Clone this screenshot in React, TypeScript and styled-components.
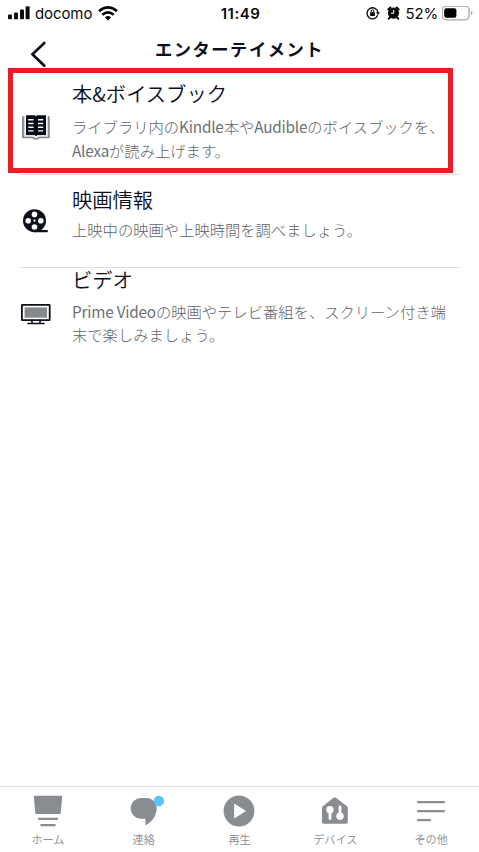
import React from "react";
import styled, { createGlobalStyle } from "styled-components";

const GlobalStyle = createGlobalStyle`
  * { box-sizing: border-box; }
  body { margin: 0; background: #fff; }
`;

const Screen = styled.div`
  position: relative;
  width: 479px;
  height: 852px;
  display: flex;
  flex-direction: column;
  overflow: hidden;
  background: #fff;
  color: #0d0f1c;
  font-family: "Noto Sans CJK JP", sans-serif;
`;

const StatusBar = styled.div`
  height: 26px;
  flex: none;
  display: grid;
  grid-template-columns: 1fr auto 1fr;
  padding: 0 6px 0 8px;
  font: 400 15.3px/26px Inter, sans-serif;
  color: #0b0b0b;
`;

const StatusGroup = styled.div<{ $end?: boolean }>`
  display: flex;
  align-items: center;
  justify-content: ${(p) => (p.$end ? "flex-end" : "flex-start")};
  svg { display: block; flex: none; }
`;

const Carrier = styled.span`
  margin: 1px 6px 0 5px;
  font-size: 15px;
  line-height: 25px;
  letter-spacing: -0.1px;
`;

const Clock = styled.div`
  padding-top: 1px;
  line-height: 25px;
  font-weight: 600;
  font-size: 15px;
  letter-spacing: 0.5px;
`;

const AlarmSlot = styled.span`
  margin-left: 7px;
`;

const Percent = styled.span`
  margin: 1px 4px 0 6px;
  line-height: 25px;
  font-size: 15px;
  letter-spacing: -0.2px;
`;

const Header = styled.header`
  height: 42px;
  flex: none;
  display: grid;
  grid-template-columns: 80px 1fr 80px;
`;

const BackButton = styled.button`
  border: 0;
  padding: 14px 0 0 30px;
  background: none;
  text-align: left;
  color: #0d0f1c;
  svg { display: block; }
`;

const Title = styled.h1`
  margin: 0;
  padding-top: 11px;
  text-align: center;
  white-space: nowrap;
  font-size: 17.3px;
  line-height: 24px;
  font-weight: 700;
  letter-spacing: 1.5px;
`;

const List = styled.main`
  flex: 1;
`;

const Row = styled.div<{ $height: number; $divided?: boolean; $iconTop: number }>`
  height: ${(p) => p.$height}px;
  margin: 0 20px;
  display: grid;
  grid-template-columns: 52px 1fr;
  border-bottom: ${(p) => (p.$divided ? "1px solid #dedfe0" : "0")};
  > svg { display: block; margin-top: ${(p) => p.$iconTop}px; }
`;

const RowText = styled.div<{ $top: number }>`
  margin-top: ${(p) => p.$top}px;
`;

const RowTitle = styled.h2<{ $gap: number }>`
  margin: 0 0 ${(p) => p.$gap}px;
  font-size: 20.3px;
  line-height: 30px;
  font-weight: 350;
  white-space: nowrap;
`;

const Description = styled.p<{ $leading: number }>`
  margin: 0;
  color: #5f6367;
  font-size: 15.3px;
  font-weight: 300;
  line-height: ${(p) => p.$leading}px;
  white-space: nowrap;
`;

const Latin = styled.span`
  color: #6c7074;
  font-weight: 400;
  letter-spacing: -0.2px;
`;

const Highlight = styled.div`
  position: absolute;
  left: 8px;
  top: 68px;
  width: 445px;
  height: 105px;
  border: 5px solid #ed1c24;
`;

const TabBar = styled.nav`
  height: 66px;
  flex: none;
  display: grid;
  grid-template-columns: repeat(5, 1fr);
  border-top: 1px solid #dfe0e2;
`;

const Tab = styled.div`
  display: flex;
  flex-direction: column;
  align-items: center;
  padding-top: 8px;
  color: #898c91;
  font-size: 11.1px;
  font-weight: 350;
  line-height: 16px;
  svg { display: block; margin-bottom: 4px; overflow: visible; }
`;

const SignalIcon = () => (
  <svg width="22" height="14" viewBox="0 0 22 14" fill="#0b0b0b">
    <rect x="0" y="8.6" width="4" height="4.6" rx="1" />
    <rect x="6" y="6.5" width="4" height="6.7" rx="1" />
    <rect x="12" y="3.5" width="4" height="9.7" rx="1" />
    <rect x="17.6" y=".3" width="4" height="12.9" rx="1" />
  </svg>
);

const WifiIcon = () => (
  <svg width="20" height="15" viewBox="0 0 20 15" fill="none" stroke="#0b0b0b" strokeWidth="2.5">
    <path d="M1 5.2Q10-2.4 19 5.2M4.3 8.8Q10 4 15.7 8.8" />
    <path d="M10 14.5 6.9 11.4Q10 8.8 13.1 11.4Z" fill="#0b0b0b" stroke="none" />
  </svg>
);

const RotationLockIcon = () => (
  <svg width="14" height="14" viewBox="0 0 14 14" fill="none" stroke="#0b0b0b" strokeWidth="1.3">
    <path d="M11.7 9.2A5.5 5.5 0 1 1 12 6.5" />
    <path d="M10 6.3h4l-2 2.6Z" fill="#0b0b0b" stroke="none" />
    <rect x="4.1" y="6.3" width="4.8" height="3.7" rx=".5" fill="#0b0b0b" stroke="none" />
    <path d="M5.2 6.5V5a1.3 1.3 0 0 1 2.6 0v1.5" strokeWidth="1" />
  </svg>
);

const AlarmIcon = () => (
  <svg width="13" height="14" viewBox="0 0 13 14">
    <circle cx="6.5" cy="7.1" r="5.6" fill="#0b0b0b" />
    <path d="M1.3 3.4 3.4 1.5M11.7 3.4 9.6 1.5M3 11.3l-1.2 1.4M10 11.3l1.2 1.4" stroke="#0b0b0b" strokeWidth="2" strokeLinecap="round" />
    <path d="M6.7 4v3.3H3.9" fill="none" stroke="#fff" strokeWidth="1" />
  </svg>
);

const BatteryIcon = () => (
  <svg width="31" height="15" viewBox="0 0 31 15">
    <rect x=".2" y=".2" width="27" height="13.6" rx="4" fill="none" stroke="#a6a6a6" strokeWidth="1.3" />
    <rect x="2.2" y="2.2" width="12.2" height="9.6" rx="2" fill="#000" />
    <path d="M29 4.8q1.5.7 1.5 2.2T29 9.2Z" fill="#a6a6a6" />
  </svg>
);

const BackIcon = () => (
  <svg width="17" height="27" viewBox="0 0 17 27" fill="none" stroke="currentColor" strokeWidth="2.7" strokeLinecap="round">
    <path d="M14.3 2 2.5 13.3l11.8 11.4" />
  </svg>
);

const BookIcon = () => (
  <svg width="32" height="28" viewBox="0 0 32 28">
    <path d="M3 3.2V24.3h9.3q1.2 1.5 3.5 1.5t3.5-1.5h9.5V3.2" fill="none" stroke="#85888c" strokeWidth="1.8" />
    <path d="M4.5 3.2V22.8h22.8V3.2" fill="none" stroke="#d4d5d7" strokeWidth="1" />
    <path d="M6 2.3h8.7l1.3 1 1.3-1H26v19.8h-8.6L16 23.3l-1.4-1.2H6Z" fill="#070a17" />
    <path d="M8.3 6.7h5.2M8.3 10.5h5.2M8.3 14.2h5.2M8.3 17.9h5.2M18 6.7h5.2M18 10.5h5.2M18 14.2h5.2M18 17.9h5.2" stroke="#fff" strokeWidth="1.4" />
  </svg>
);

const ReelIcon = () => (
  <svg width="32" height="26" viewBox="0 0 32 26">
    <path d="M15 22h11.8q1.2 0 1.2 1.1t-1.2 1.1H14.5Z" fill="#0c0e1a" />
    <circle cx="14.5" cy="12.7" r="11.5" fill="#0c0e1a" />
    <g fill="#fff">
      <circle cx="14.5" cy="6.4" r="2.8" /><circle cx="8.2" cy="12.7" r="2.8" />
      <circle cx="20.8" cy="12.7" r="2.8" /><circle cx="14.5" cy="19" r="2.8" />
      <circle cx="14.5" cy="12.7" r="1.1" />
    </g>
  </svg>
);

const ScreenIcon = () => (
  <svg width="32" height="23" viewBox="0 0 32 23">
    <rect x="1.9" y="1.8" width="27.8" height="15.4" rx=".5" fill="#fff" stroke="#0d0f1d" strokeWidth="1.8" />
    <rect x="4.6" y="4.4" width="22.5" height="10.3" fill="#85888c" />
    <path d="M12 17v3M20 17v3M8 20.5h16" stroke="#0d0f1d" strokeWidth="1.6" strokeLinecap="round" />
  </svg>
);

const HomeIcon = () => (
  <svg width="32" height="32" viewBox="0 0 32 32" fill="currentColor">
    <path d="M2 .8h28q.3 0 .2.4l-1.5 17q-.1.7-.8.7H4.1q-.7 0-.8-.7L1.8 1.2q0-.4.2-.4Z" />
    <path d="M7 23.8h18.2M9.3 30.2h13.4" stroke="currentColor" strokeWidth="2.2" strokeLinecap="round" />
  </svg>
);

const ChatIcon = () => (
  <svg width="32" height="32" viewBox="0 0 32 32" fill="currentColor">
    <path d="M13 3h5.5C24 3 28.7 7.4 28.7 13c0 7.5-4 13-10 16.7-.9.5-1.4.2-1.3-.7l.1-5.2H13A10.3 10.3 0 0 1 13 3Z" />
    <circle cx="30.9" cy="6" r="5.2" fill="#59c3fb" />
  </svg>
);

const PlayIcon = () => (
  <svg width="32" height="32" viewBox="0 0 32 32">
    <circle cx="16" cy="16" r="15.4" fill="currentColor" />
    <path d="M11.2 8.6v15L23 16.1Z" fill="#fff" />
  </svg>
);

const DevicesIcon = () => (
  <svg width="32" height="32" viewBox="0 0 32 32">
    <path d="m14.5 2.8q1.2-1 2.4 0l11 8.4q.9.6.9 1.8v14q0 1.8-1.8 1.8H4.8Q3 28.8 3 27V13q0-1.2.9-1.8Z" fill="currentColor" />
    <g fill="#fff" stroke="#fff">
      <circle cx="11" cy="14.7" r="3.7" stroke="none" />
      <path d="M11 16v7.5M21 12v8" strokeWidth="2.8" strokeLinecap="round" />
      <circle cx="21" cy="21.2" r="3.7" stroke="none" />
    </g>
  </svg>
);

const MoreIcon = () => (
  <svg width="32" height="32" viewBox="0 0 32 32" fill="none" stroke="currentColor" strokeWidth="2.2" strokeLinecap="round">
    <path d="M3 7.2h26M3 16.2h26M3 25.2h12" />
  </svg>
);

const tabs = [
  { label: "ホーム", Icon: HomeIcon },
  { label: "連絡", Icon: ChatIcon },
  { label: "再生", Icon: PlayIcon },
  { label: "デバイス", Icon: DevicesIcon },
  { label: "その他", Icon: MoreIcon },
];

export default function App() {
  return (
    <Screen lang="ja">
      <GlobalStyle />
      <StatusBar>
        <StatusGroup>
          <SignalIcon />
          <Carrier>docomo</Carrier>
          <WifiIcon />
        </StatusGroup>
        <Clock>11:49</Clock>
        <StatusGroup $end>
          <RotationLockIcon />
          <AlarmSlot><AlarmIcon /></AlarmSlot>
          <Percent>52%</Percent>
          <BatteryIcon />
        </StatusGroup>
      </StatusBar>
      <Header>
        <BackButton aria-label="戻る"><BackIcon /></BackButton>
        <Title>エンターテイメント</Title>
      </Header>
      <List>
        <Row $height={107} $iconTop={45} $divided>
          <BookIcon />
          <RowText $top={10}>
            <RowTitle $gap={6}>本&amp;ボイスブック</RowTitle>
            <Description $leading={24}>
              ライブラリ内の<Latin>Kindle</Latin>本や<Latin>Audible</Latin>のボイスブックを、<br />
              <Latin>Alexa</Latin>が読み上げます。
            </Description>
          </RowText>
        </Row>
        <Row $height={93} $iconTop={33} $divided>
          <ReelIcon />
          <RowText $top={9}>
            <RowTitle $gap={4}>映画情報</RowTitle>
            <Description $leading={23}>上映中の映画や上映時間を調べましょう。</Description>
          </RowText>
        </Row>
        <Row $height={90} $iconTop={35}>
          <ScreenIcon />
          <RowText $top={-4}>
            <RowTitle $gap={6}>ビデオ</RowTitle>
            <Description $leading={23}>
              <Latin>Prime Video</Latin>の映画やテレビ番組を、スクリーン付き端<br />
              末で楽しみましょう。
            </Description>
          </RowText>
        </Row>
      </List>
      <TabBar>
        {tabs.map(({ label, Icon }) => (
          <Tab key={label}>
            <Icon />
            {label}
          </Tab>
        ))}
      </TabBar>
      <Highlight />
    </Screen>
  );
}
